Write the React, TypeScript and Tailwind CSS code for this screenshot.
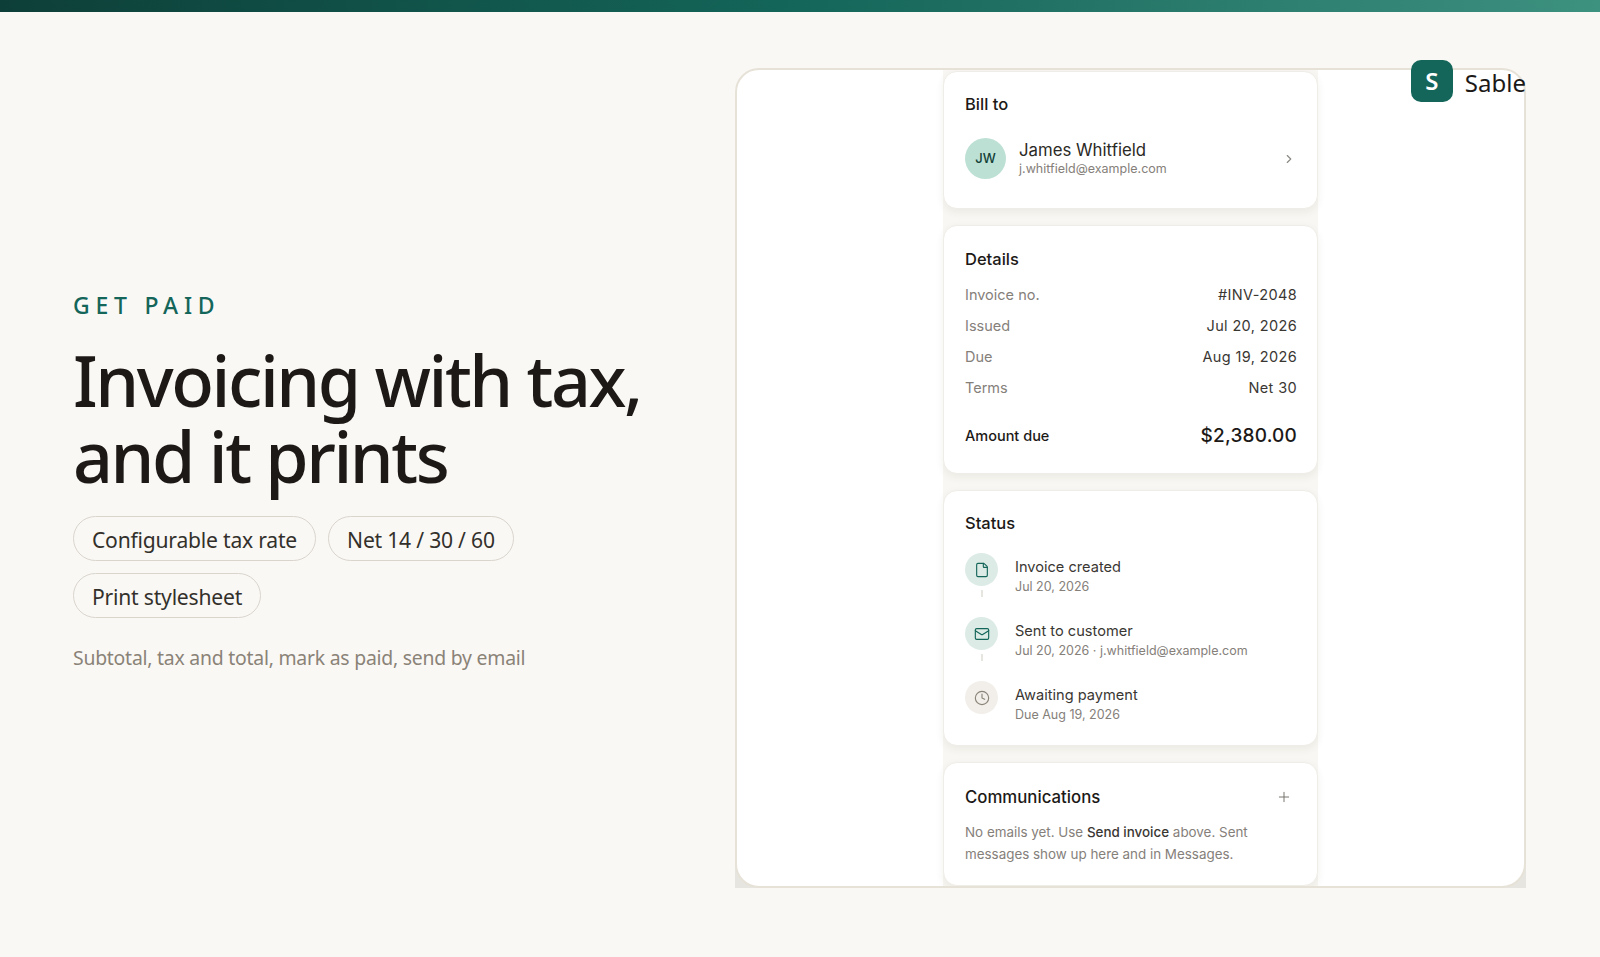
import { ChevronRight, Clock, File, Mail, Plus } from 'lucide-react';

const details = [
  { label: 'Invoice no.', value: '#INV-2048' },
  { label: 'Issued', value: 'Jul 20, 2026' },
  { label: 'Due', value: 'Aug 19, 2026' },
  { label: 'Terms', value: 'Net 30' },
];

const steps = [
  { title: 'Invoice created', sub: 'Jul 20, 2026', icon: File, done: true },
  { title: 'Sent to customer', sub: 'Jul 20, 2026 · j.whitfield@example.com', icon: Mail, done: true },
  { title: 'Awaiting payment', sub: 'Due Aug 19, 2026', icon: Clock, done: false },
];

const chips = ['Configurable tax rate', 'Net 14 / 30 / 60', 'Print stylesheet'];

const card =
  'bg-white rounded-[14px] border border-[#efede7] shadow-[0_3px_8px_rgba(60,50,30,0.07)] pl-[21px] pr-[20px]';

export default function App() {
  return (
    <div className="min-h-[957px] bg-[#faf8f5] font-['Noto_Sans',sans-serif] text-[#1c1917]">
      <div className="h-3 bg-gradient-to-r from-[#0d3f38] via-[#14665a] to-[#3d917f]" />

      <div className="flex justify-between pl-[73px] pr-[74px] pt-[56px]">
        {/* left copy */}
        <div className="flex w-[600px] flex-col justify-center pt-[7px]">
          <p className="text-[23px] font-medium leading-[30px] tracking-[0.25em] text-[#14665a]">GET PAID</p>
          <h1 className="mt-[22px] text-[70px] font-medium leading-[76px] tracking-[-0.035em] text-[#1c1917]">
            Invoicing with tax,
            <br />
            and it prints
          </h1>
          <div className="mt-[22px] flex flex-wrap gap-3">
            {chips.map((chip) => (
              <span
                key={chip}
                className="rounded-full border border-[#d9d5cd] px-[18px] pb-[5px] pt-[7px] text-[21.1px] leading-[31px] tracking-[-0.01em] text-[#33302b]"
              >
                {chip}
              </span>
            ))}
          </div>
          <p className="mt-[25px] text-[19.4px] leading-[30px] tracking-[-0.012em] text-[#8a8378]">
            Subtotal, tax and total, mark as paid, send by email
          </p>
        </div>

        {/* product shot */}
        <div className="relative h-[820px] w-[791px]">
          <div className="h-full rounded-t-[24px] bg-[linear-gradient(to_bottom,transparent_90%,#e6e5df_90%)]">
            <div className="h-full overflow-hidden rounded-[24px] border-2 border-[#e6e2d8] bg-white">
              <div className="mx-auto flex w-[375px] flex-col gap-[16px] bg-[#f8f7f3] pt-[1px] font-['Inter',sans-serif]">
                <section className={`${card} h-[138px]`}>
                  <h2 className="pt-[21px] text-[16.5px] font-medium leading-[22px] text-[#1c1917]">Bill to</h2>
                  <div className="mt-[23px] flex items-center">
                    <div className="flex h-[41px] w-[41px] items-center justify-center rounded-full bg-[#bde0d5] text-[13px] font-medium text-[#123f37]">
                      JW
                    </div>
                    <div className="ml-[13px] flex-1">
                      <div className="text-[16.8px] leading-[21px] text-[#2b2925]">James Whitfield</div>
                      <div className="text-[12.5px] leading-[16px] text-[#85807a]">j.whitfield@example.com</div>
                    </div>
                    <ChevronRight size={14} className="mr-[1px] text-[#8c8a85]" />
                  </div>
                </section>

                <section className={`${card} h-[249px]`}>
                  <h2 className="pt-[21px] text-[16.5px] font-medium leading-[24px] text-[#1c1917]">Details</h2>
                  <div className="mt-[8px]">
                    {details.map((row) => (
                      <div key={row.label} className="flex h-[31px] items-center justify-between text-[14.5px]">
                        <span className="text-[#85807a]">{row.label}</span>
                        <span className="tracking-[0.025em] text-[#3a3733]">{row.value}</span>
                      </div>
                    ))}
                  </div>
                  <div className="mt-[19px] flex h-[28px] items-center justify-between">
                    <span className="text-[14.5px] font-medium text-[#1c1917]">Amount due</span>
                    <span className="text-[19px] font-medium tracking-[0.01em] text-[#1c1917]">$2,380.00</span>
                  </div>
                </section>

                <section className={`${card} h-[256px]`}>
                  <h2 className="pt-[20px] text-[16.5px] font-medium leading-[24px] text-[#1c1917]">Status</h2>
                  <div className="mt-[18px] flex flex-col">
                    {steps.map((step, i) => (
                      <div key={step.title} className="flex h-[64px] gap-[17px]">
                        <div className="flex w-[33px] flex-col items-center">
                          <div
                            className={`flex h-[33px] w-[33px] items-center justify-center rounded-full ${
                              step.done ? 'bg-[#dcebe5] text-[#14665a]' : 'bg-[#f2efea] text-[#8a8378]'
                            }`}
                          >
                            <step.icon size={16} strokeWidth={1.7} />
                          </div>
                          {i < steps.length - 1 && <div className="mt-[4px] h-[7px] w-[2px] bg-[#e7e5df]" />}
                        </div>
                        <div className="pt-[4px]">
                          <div className="text-[14.6px] leading-[21px] text-[#3a3733]">{step.title}</div>
                          <div className="text-[12.5px] leading-[18px] text-[#85807a]">{step.sub}</div>
                        </div>
                      </div>
                    ))}
                  </div>
                </section>

                <section className={`${card} h-[124px]`}>
                  <div className="flex items-center justify-between pt-[22px]">
                    <h2 className="text-[16.8px] font-medium leading-[24px] text-[#1c1917]">Communications</h2>
                    <Plus size={16} strokeWidth={1.4} className="mr-[5px] text-[#6f6c66]" />
                  </div>
                  <p className="mt-[13px] text-[13.4px] leading-[21.5px] text-[#85807a]">
                    No emails yet. Use <span className="font-medium text-[#3a3733]">Send invoice</span> above. Sent
                    messages show up here and in Messages.
                  </p>
                </section>
              </div>
            </div>
          </div>

          {/* brand lockup sits over the frame corner */}
          <div className="absolute right-0 top-[-8px] flex items-center gap-[12px]">
            <div className="flex h-[42px] w-[42px] items-center justify-center rounded-[10px] bg-[#14665a] text-[24px] font-semibold text-white">
              S
            </div>
            <span className="pt-[4px] text-[24px] leading-[32px] text-[#1c1917]">Sable</span>
          </div>
        </div>
      </div>
    </div>
  );
}
